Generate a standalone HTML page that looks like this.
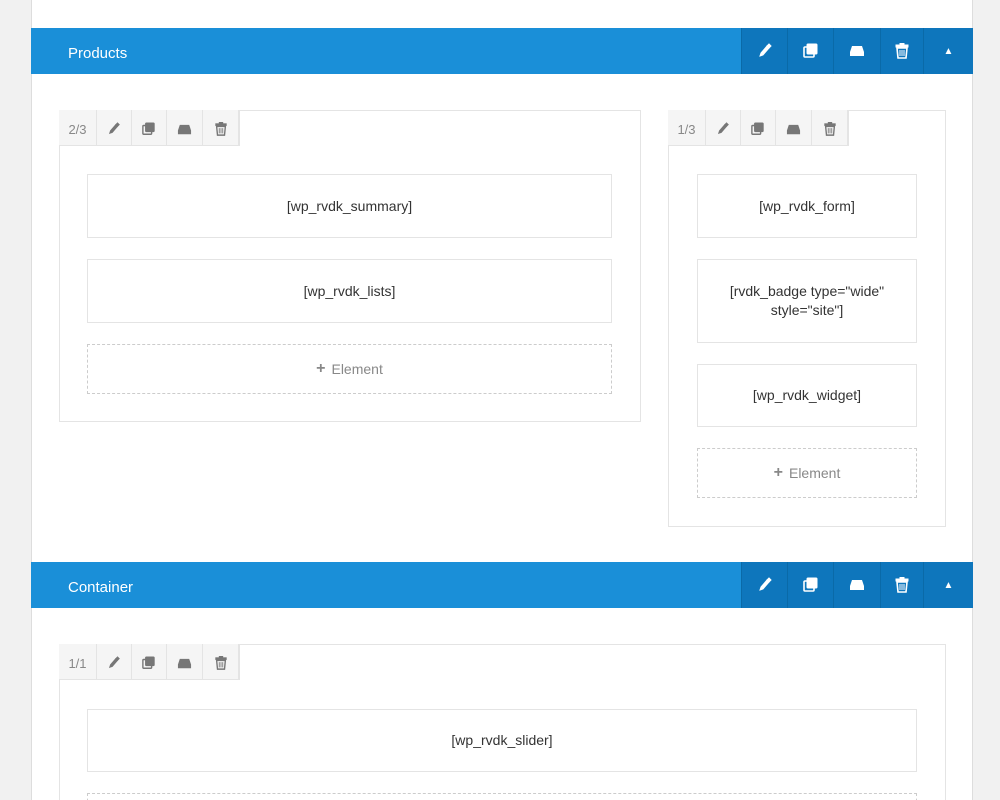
<!DOCTYPE html><html style="width:1000px;height:800px;overflow:hidden"><head><style>
*{box-sizing:border-box;margin:0;padding:0}
body{width:1000px;height:800px;background:#f1f1f1;font-family:"Liberation Sans",sans-serif;position:relative;overflow:hidden}
.page{position:absolute;left:31px;top:0;width:942px;height:800px;background:#fff;border-left:1px solid #ddd;border-right:1px solid #ddd}
.hdr{position:absolute;left:31px;width:942px;height:46px;background:#1a8fd8;color:#fff;font-size:15px}
.hdr .t{position:absolute;left:37px;top:17px}
.hb{position:absolute;top:0;height:46px;background:#0e76bc;border-left:1px solid #0a6aa8;display:flex;align-items:center;justify-content:center}
.box{position:absolute;border:1px solid #e4e4e4;background:#fff}
.tb{position:absolute;height:36px;background:#f5f5f5;border:1px solid #e4e4e4;border-top:none;border-left:none;display:flex}
.tb div{border-right:1px solid #e4e4e4;display:flex;align-items:center;justify-content:center;color:#888;font-size:13px;padding-top:3px}
.el{position:absolute;border:1px solid #e4e4e4;display:flex;align-items:center;justify-content:center;text-align:center;font-size:14px;color:#333;line-height:19px}
.dash{position:absolute;border:1px dashed #ccc;display:flex;align-items:center;justify-content:center;font-size:14px;color:#888}
</style></head><body>
<div class="page"></div>
<svg width="0" height="0" style="position:absolute"><defs>
<g id="brush"><path d="M3 13l3-1 6-7-2-2-6 7z" /><path d="M10 3l2-2 2 2-2 2z"/></g>
<g id="copy"><rect x="1" y="4" width="10" height="10" rx="1" fill="none" stroke-width="1.6"/><rect x="4" y="1" width="10" height="10" rx="1"/></g>
<g id="drive"><path d="M3 3h10l2 6v4H1V9z"/></g>
<g id="trash"><rect x="2" y="2" width="12" height="2"/><rect x="6" y="0.5" width="4" height="2"/><path d="M3 5h10l-1 10H4z" fill="none" stroke-width="1.6"/><path d="M6 7v6M8 7v6M10 7v6" fill="none" stroke-width="1"/></g>
</defs></svg>

<div class="hdr" style="top:28px"><span class="t">Products</span>
<div class="hb" style="left:710px;width:46px"><svg width="16" height="16" fill="#fff" stroke="#fff"><use href="#brush"/></svg></div>
<div class="hb" style="left:756px;width:46px"><svg width="16" height="16" fill="#fff" stroke="#fff"><use href="#copy"/></svg></div>
<div class="hb" style="left:802px;width:47px"><svg width="16" height="16" fill="#fff"><use href="#drive"/></svg></div>
<div class="hb" style="left:849px;width:43px"><svg width="16" height="16" fill="#fff" stroke="#fff"><use href="#trash"/></svg></div>
<div class="hb" style="left:892px;width:50px;font-size:10px">▲</div>
</div>

<div class="box" style="left:59px;top:110px;width:582px;height:312px"></div>
<div class="tb" style="left:59px;top:110px"><div style="width:38px">2/3</div><div style="width:35px"><svg width="14" height="14" viewBox="0 0 16 16" fill="#777" stroke="#777"><use href="#brush"/></svg></div><div style="width:35px"><svg width="14" height="14" viewBox="0 0 16 16" fill="#777" stroke="#777"><use href="#copy"/></svg></div><div style="width:36px"><svg width="15" height="15" viewBox="0 0 16 16" fill="#777"><use href="#drive"/></svg></div><div style="width:36px"><svg width="14" height="14" viewBox="0 0 16 16" fill="#777" stroke="#777"><use href="#trash"/></svg></div></div>
<div class="el" style="left:87px;top:174px;width:525px;height:64px">[wp_rvdk_summary]</div>
<div class="el" style="left:87px;top:259px;width:525px;height:64px">[wp_rvdk_lists]</div>
<div class="dash" style="left:87px;top:344px;width:525px;height:50px"><b style="margin-right:6px;font-size:16px">+</b>Element</div>

<div class="box" style="left:668px;top:110px;width:278px;height:417px"></div>
<div class="tb" style="left:668px;top:110px"><div style="width:38px">1/3</div><div style="width:35px"><svg width="14" height="14" viewBox="0 0 16 16" fill="#777" stroke="#777"><use href="#brush"/></svg></div><div style="width:35px"><svg width="14" height="14" viewBox="0 0 16 16" fill="#777" stroke="#777"><use href="#copy"/></svg></div><div style="width:36px"><svg width="15" height="15" viewBox="0 0 16 16" fill="#777"><use href="#drive"/></svg></div><div style="width:36px"><svg width="14" height="14" viewBox="0 0 16 16" fill="#777" stroke="#777"><use href="#trash"/></svg></div></div>
<div class="el" style="left:697px;top:174px;width:220px;height:64px">[wp_rvdk_form]</div>
<div class="el" style="left:697px;top:259px;width:220px;height:84px">[rvdk_badge type="wide"<br>style="site"]</div>
<div class="el" style="left:697px;top:364px;width:220px;height:63px">[wp_rvdk_widget]</div>
<div class="dash" style="left:697px;top:448px;width:220px;height:50px"><b style="margin-right:6px;font-size:16px">+</b>Element</div>

<div class="hdr" style="top:562px"><span class="t">Container</span>
<div class="hb" style="left:710px;width:46px"><svg width="16" height="16" fill="#fff" stroke="#fff"><use href="#brush"/></svg></div>
<div class="hb" style="left:756px;width:46px"><svg width="16" height="16" fill="#fff" stroke="#fff"><use href="#copy"/></svg></div>
<div class="hb" style="left:802px;width:47px"><svg width="16" height="16" fill="#fff"><use href="#drive"/></svg></div>
<div class="hb" style="left:849px;width:43px"><svg width="16" height="16" fill="#fff" stroke="#fff"><use href="#trash"/></svg></div>
<div class="hb" style="left:892px;width:50px;font-size:10px">▲</div>
</div>

<div class="box" style="left:59px;top:644px;width:887px;height:170px"></div>
<div class="tb" style="left:59px;top:644px"><div style="width:38px">1/1</div><div style="width:35px"><svg width="14" height="14" viewBox="0 0 16 16" fill="#777" stroke="#777"><use href="#brush"/></svg></div><div style="width:35px"><svg width="14" height="14" viewBox="0 0 16 16" fill="#777" stroke="#777"><use href="#copy"/></svg></div><div style="width:36px"><svg width="15" height="15" viewBox="0 0 16 16" fill="#777"><use href="#drive"/></svg></div><div style="width:36px"><svg width="14" height="14" viewBox="0 0 16 16" fill="#777" stroke="#777"><use href="#trash"/></svg></div></div>
<div class="el" style="left:87px;top:709px;width:830px;height:63px">[wp_rvdk_slider]</div>
<div class="dash" style="left:87px;top:793px;width:830px;height:20px"></div>
</body></html>
